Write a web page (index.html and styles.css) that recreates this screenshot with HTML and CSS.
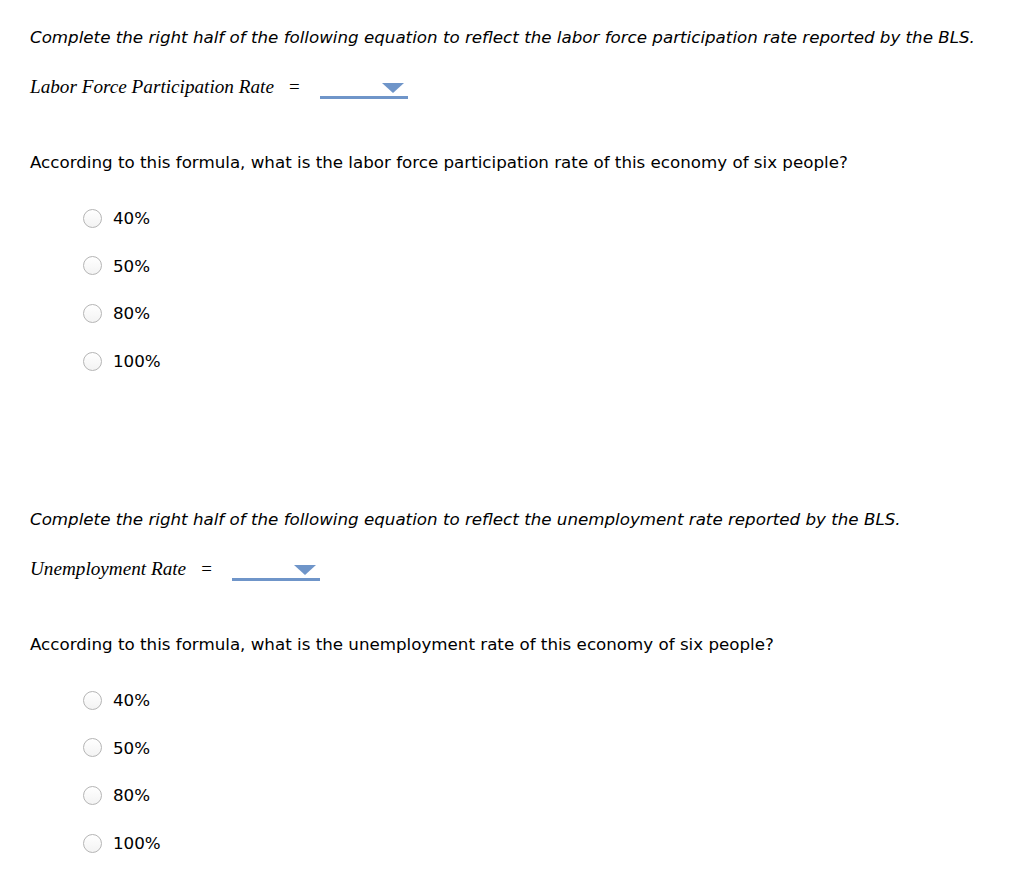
FILE: index.html
```html
<!DOCTYPE html>
<html>
<head>
<meta charset="utf-8">
<link rel="stylesheet" href="styles.css">
</head>
<body>
<div class="page">
  <section class="q">
    <p class="instr">Complete the right half of the following equation to reflect the labor force participation rate reported by the BLS.</p>
    <div class="eq">
      <span class="var">Labor Force Participation Rate</span>
      <span class="eqsign">=</span>
      <span class="dd"><span class="arrow"></span></span>
    </div>
    <p class="ask">According to this formula, what is the labor force participation rate of this economy of six people?</p>
    <ul class="opts">
      <li><span class="radio"></span>40%</li>
      <li><span class="radio"></span>50%</li>
      <li><span class="radio"></span>80%</li>
      <li><span class="radio"></span>100%</li>
    </ul>
  </section>
  <section class="q">
    <p class="instr">Complete the right half of the following equation to reflect the unemployment rate reported by the BLS.</p>
    <div class="eq">
      <span class="var">Unemployment Rate</span>
      <span class="eqsign">=</span>
      <span class="dd"><span class="arrow"></span></span>
    </div>
    <p class="ask">According to this formula, what is the unemployment rate of this economy of six people?</p>
    <ul class="opts">
      <li><span class="radio"></span>40%</li>
      <li><span class="radio"></span>50%</li>
      <li><span class="radio"></span>80%</li>
      <li><span class="radio"></span>100%</li>
    </ul>
  </section>
</div>
</body>
</html>
```
FILE: styles.css
```css
html, body {
  margin: 0;
  padding: 0;
  background: #ffffff;
}
.page {
  padding: 27px 0 0 30px;
  font-family: "DejaVu Sans", Verdana, sans-serif;
  font-size: 16.7px;
  color: #000;
  display: flex;
  flex-direction: column;
  gap: 136px;
}
.q {
  display: flex;
  flex-direction: column;
}
.instr {
  margin: 0;
  font-style: italic;
  line-height: 20px;
  height: 20px;
  white-space: nowrap;
}
.eq {
  margin-top: 28px;
  height: 24px;
  display: flex;
  align-items: center;
  font-family: "Liberation Serif", "Times New Roman", serif;
  font-size: 19.2px;
  line-height: 24px;
}
.var {
  font-style: italic;
}
.eqsign {
  margin-left: 15px;
  font-size: 19px;
}
.dd {
  margin-left: 20px;
  width: 88px;
  height: 23px;
  border-bottom: 3px solid #6f95c9;
  box-sizing: border-box;
  position: relative;
  align-self: flex-start;
  margin-top: 1px;
}
.arrow {
  position: absolute;
  right: 4px;
  top: 7px;
  width: 0;
  height: 0;
  border-left: 11px solid transparent;
  border-right: 11px solid transparent;
  border-top: 10px solid #6f95c9;
}
.ask {
  margin: 53px 0 0 0;
  line-height: 20px;
  height: 20px;
  white-space: nowrap;
}
.opts {
  list-style: none;
  margin: 34px 0 0 0;
  padding: 0 0 0 53px;
  display: flex;
  flex-direction: column;
  gap: 23.7px;
}
.opts li {
  display: flex;
  align-items: center;
  height: 24px;
  line-height: 24px;
}
.radio {
  display: inline-block;
  width: 19px;
  height: 19px;
  box-sizing: border-box;
  border: 1px solid #b5b5b5;
  border-radius: 50%;
  background: linear-gradient(#ffffff, #f3f3f3);
  margin-right: 11px;
}
```
